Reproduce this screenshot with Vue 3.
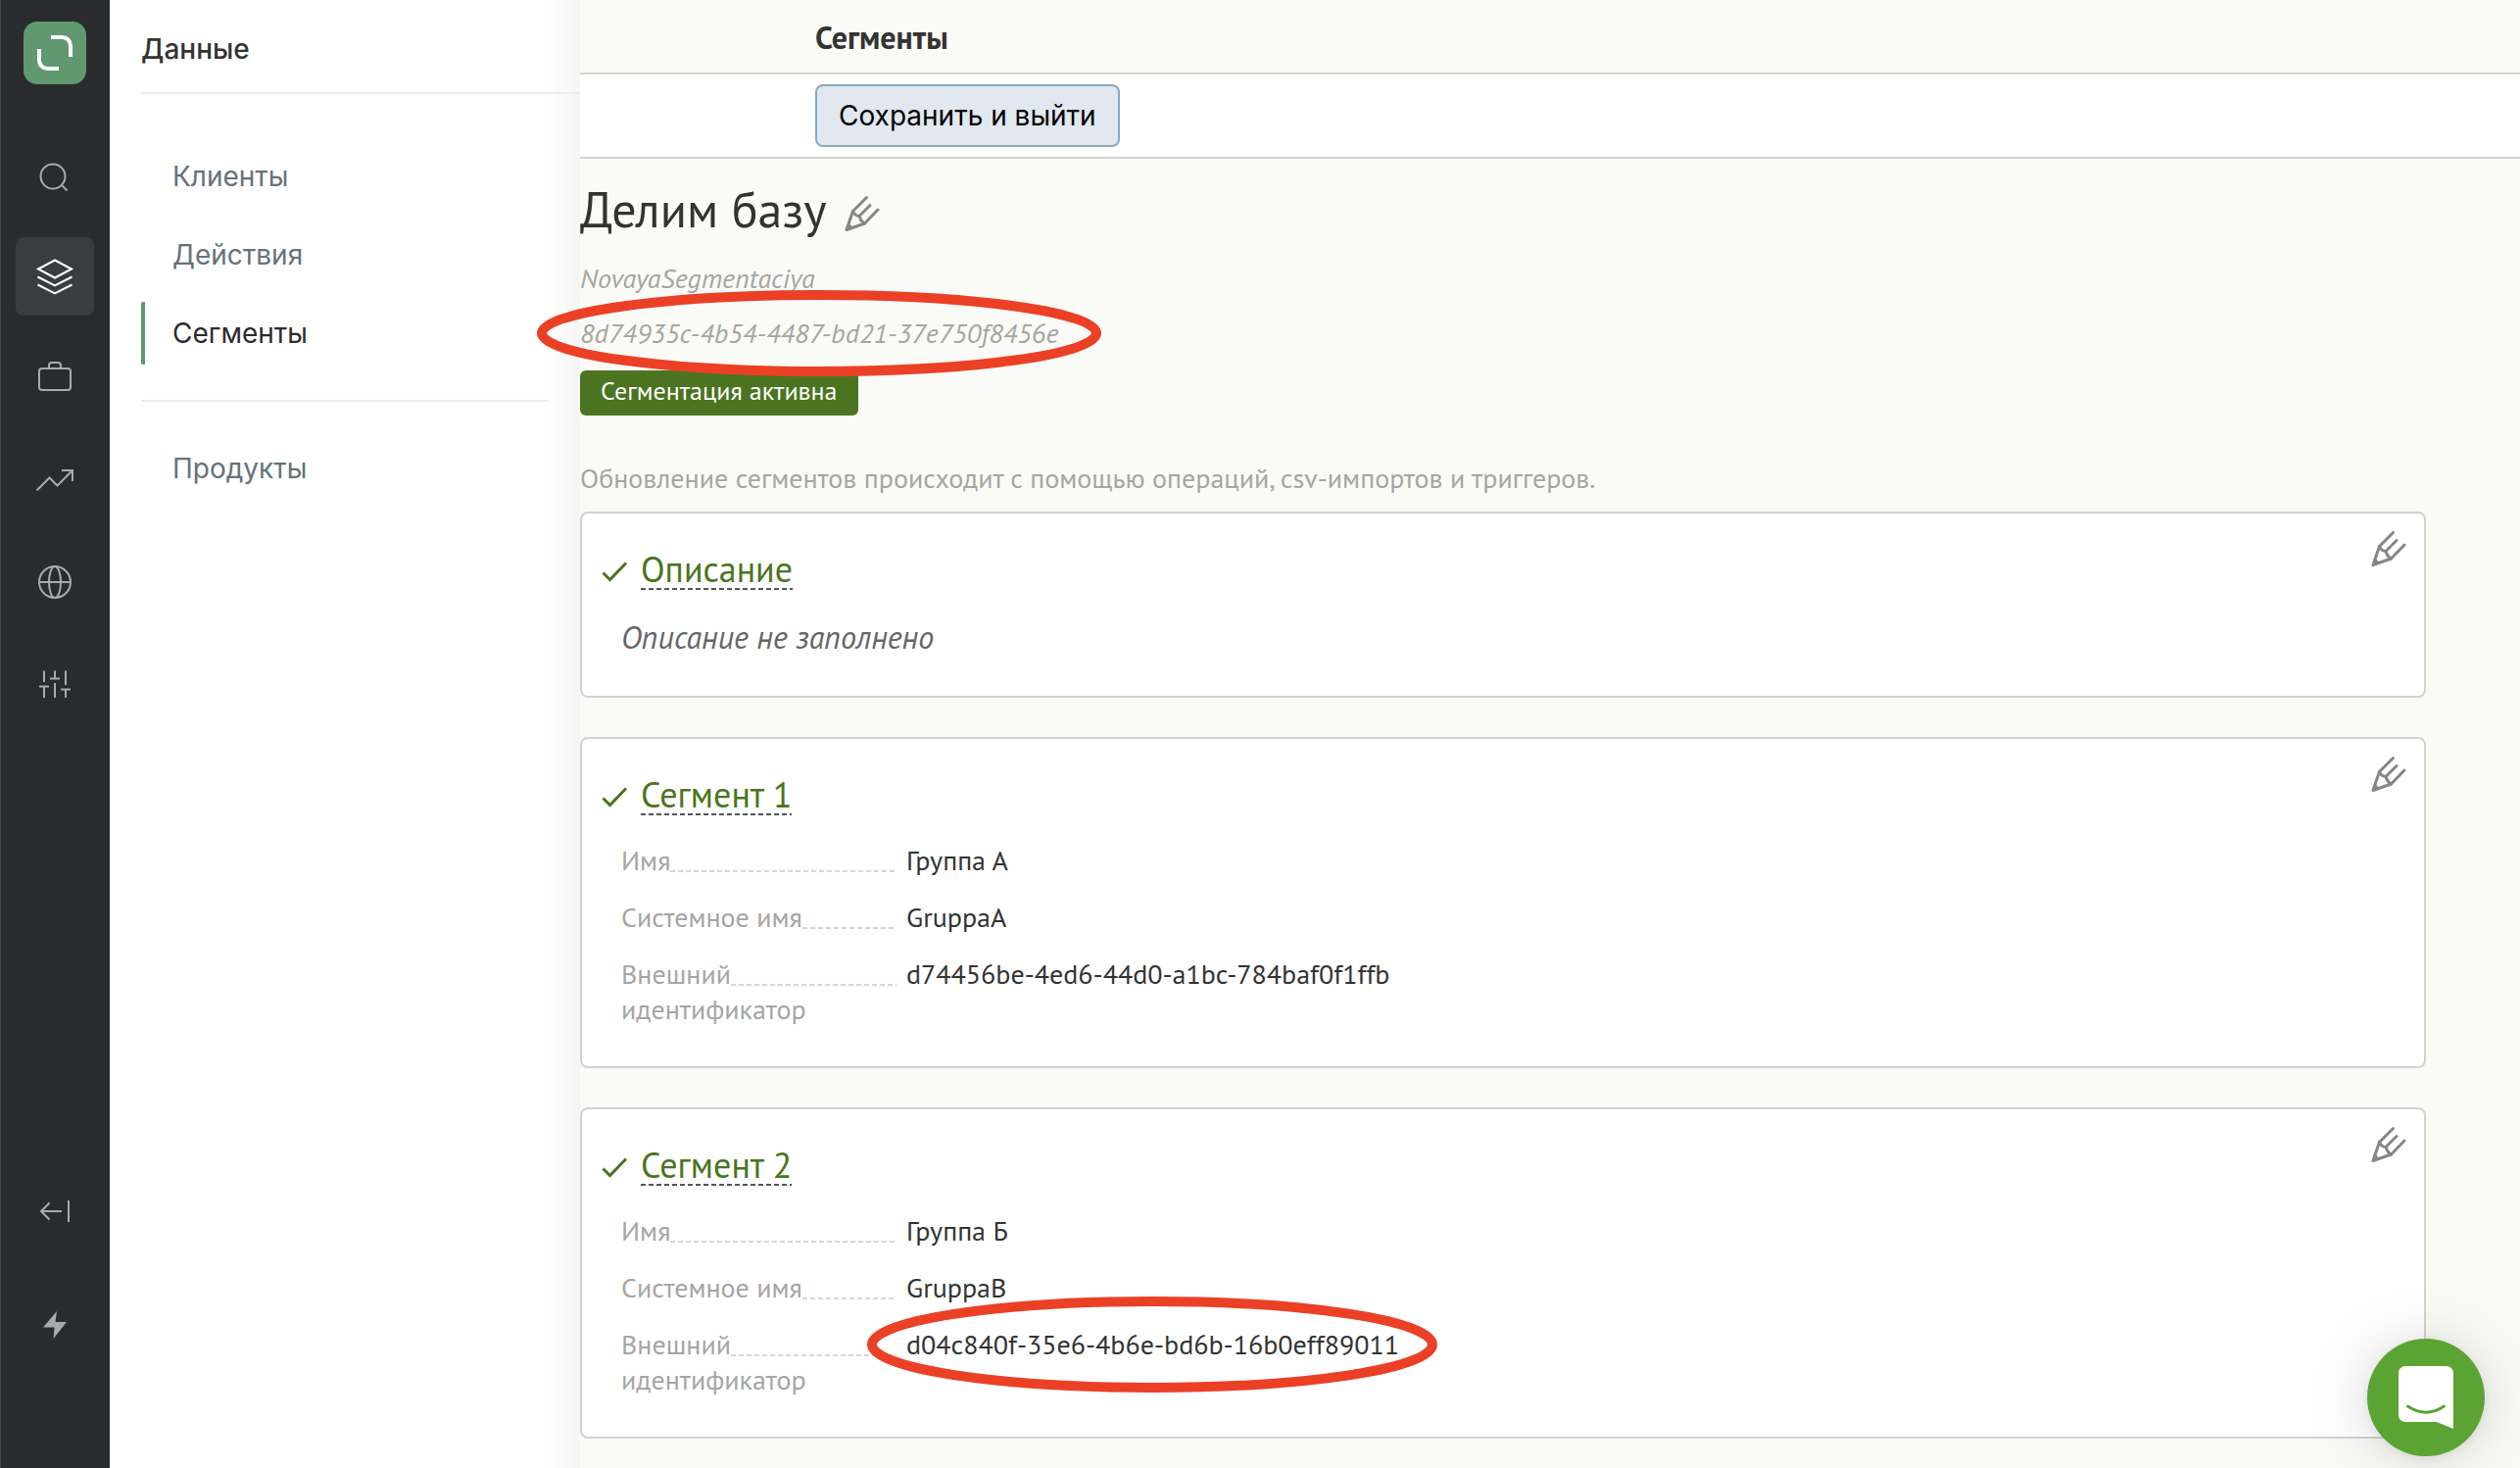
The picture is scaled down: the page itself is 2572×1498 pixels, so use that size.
<script setup>
const navItems = [
  { id: 'search', label: 'Поиск' },
  { id: 'layers', label: 'Данные', active: true },
  { id: 'case', label: 'Кампании' },
  { id: 'trend', label: 'Отчёты' },
  { id: 'globe', label: 'Интеграции' },
  { id: 'sliders', label: 'Настройки' },
]

const segments = [
  {
    title: 'Сегмент 1',
    rows: [
      { label: 'Имя', value: 'Группа А' },
      { label: 'Системное имя', value: 'GruppaA' },
      { label: 'Внешний', rest: 'идентификатор', value: 'd74456be-4ed6-44d0-a1bc-784baf0f1ffb' },
    ],
  },
  {
    title: 'Сегмент 2',
    rows: [
      { label: 'Имя', value: 'Группа Б' },
      { label: 'Системное имя', value: 'GruppaB' },
      { label: 'Внешний', rest: 'идентификатор', value: 'd04c840f-35e6-4b6e-bd6b-16b0eff89011', marked: true },
    ],
  },
]
</script>

<template>
  <div class="app">
    <svg class="defs" width="0" height="0" aria-hidden="true">
      <symbol id="pencil" viewBox="0 0 36 38">
        <g fill="none" stroke="#868686" stroke-width="3" stroke-linecap="round" stroke-linejoin="round">
          <path d="M22.5 2.5 8.5 16.5 2 35.5 20.5 29 34 15" />
          <path d="M26 10.5 15 21.5" />
          <path d="M8.5 16.5C10 20 12 21.5 15 21.5C16 25 17.5 27.5 20.5 29" />
          <path d="M4 30.5 7 33.5" />
        </g>
      </symbol>
      <symbol id="check" viewBox="0 0 28 24">
        <path d="M2.5 12.5 9.5 19.5 26 2.5" fill="none" stroke="#4b7420" stroke-width="3" />
      </symbol>
    </svg>

    <nav class="rail" aria-label="Разделы">
      <a class="logo" href="#" aria-label="Главная">
        <svg viewBox="0 0 64 64" width="64" height="64">
          <g fill="none" stroke="#fff" stroke-width="4">
            <path d="M28 16H39.5A8.5 8.5 0 0 1 48 24.5V36" />
            <path d="M16 28V39.5A8.5 8.5 0 0 0 24.5 48H36" />
          </g>
        </svg>
      </a>
      <a
        v-for="item in navItems"
        :key="item.id"
        href="#"
        class="rail-item"
        :class="{ active: item.active }"
        :aria-label="item.label"
      >
        <svg viewBox="0 0 48 48" width="48" height="48" fill="none" stroke="currentColor" stroke-width="2">
          <template v-if="item.id === 'search'">
            <circle cx="22" cy="26" r="12.5" />
            <path d="M31 35 36.5 40.5" />
          </template>
          <template v-else-if="item.id === 'layers'">
            <path d="M24 7.5 41 16.5 24 25.5 7 16.5Z" />
            <path d="M6.5 24.5 24 33.5 41.5 24.5" />
            <path d="M6.5 32.5 24 41.5 41.5 32.5" />
          </template>
          <template v-else-if="item.id === 'case'">
            <rect x="8" y="14" width="32" height="22" rx="3" />
            <path d="M18 14V11A3 3 0 0 1 21 8H27A3 3 0 0 1 30 11V14" />
          </template>
          <template v-else-if="item.id === 'trend'">
            <path d="M5.5 34.5 18.5 21.5 26.5 29.5 42 14" />
            <path d="M31 14H42V25" />
          </template>
          <template v-else-if="item.id === 'globe'">
            <circle cx="24" cy="24" r="16" />
            <ellipse cx="24" cy="24" rx="6" ry="16" />
            <path d="M8 24H40" />
          </template>
          <template v-else>
            <path d="M13 10.5V22M13 26.5V38M8 26.5H18" />
            <path d="M24 10.5V19M19 18.5H29M24 23V38" />
            <path d="M35 10.5V25M30 29.5H40M35 29.5V38" />
          </template>
        </svg>
      </a>
      <div class="rail-bottom">
        <a href="#" class="rail-item" aria-label="Свернуть">
          <svg viewBox="0 0 48 48" width="48" height="48" fill="none" stroke="currentColor" stroke-width="2">
            <path d="M31 24H10M18.5 15.5 10 24 18.5 32.5M38 13V35" />
          </svg>
        </a>
        <a href="#" class="rail-item" aria-label="Быстрые действия">
          <svg viewBox="0 0 48 48" width="48" height="48" fill="currentColor">
            <path d="M26 10 12 26.5H23.5L22.5 38 36 21H24.5Z" />
          </svg>
        </a>
      </div>
    </nav>

    <aside class="panel">
      <h2 class="panel-title">Данные</h2>
      <ul class="menu">
        <li><a href="#">Клиенты</a></li>
        <li><a href="#">Действия</a></li>
        <li><a href="#" class="current">Сегменты</a></li>
      </ul>
      <ul class="menu menu-extra">
        <li><a href="#">Продукты</a></li>
      </ul>
    </aside>

    <main class="main">
      <header class="top">Сегменты</header>
      <div class="toolbar">
        <button type="button" class="save">Сохранить и выйти</button>
      </div>

      <div class="content">
        <div class="heading">
          <h1>Делим базу</h1>
          <button type="button" class="edit" aria-label="Изменить название">
            <svg width="36" height="38"><use href="#pencil" /></svg>
          </button>
        </div>
        <p class="meta">NovayaSegmentaciya</p>
        <p class="meta">
          <span class="marked">8d74935c-4b54-4487-bd21-37e750f8456e
            <svg class="ring ring-head" viewBox="0 0 576 88" preserveAspectRatio="none" aria-hidden="true">
              <ellipse cx="288" cy="44" rx="283" ry="39" />
            </svg>
          </span>
        </p>
        <p class="badge">Сегментация активна</p>
        <p class="hint">Обновление сегментов происходит с помощью операций, csv-импортов и триггеров.</p>

        <section class="card">
          <div class="card-head">
            <svg width="28" height="24"><use href="#check" /></svg>
            <a href="#" class="card-title">Описание</a>
          </div>
          <p class="empty">Описание не заполнено</p>
          <button type="button" class="edit card-edit" aria-label="Изменить">
            <svg width="36" height="38"><use href="#pencil" /></svg>
          </button>
        </section>

        <section v-for="seg in segments" :key="seg.title" class="card">
          <div class="card-head">
            <svg width="28" height="24"><use href="#check" /></svg>
            <a href="#" class="card-title">{{ seg.title }}</a>
          </div>
          <dl class="rows">
            <div v-for="row in seg.rows" :key="row.label" class="row">
              <dt>
                <span class="leader">{{ row.label }}</span>
                <span v-if="row.rest">{{ row.rest }}</span>
              </dt>
              <dd>
                <span :class="{ marked: row.marked }">{{ row.value }}
                  <svg v-if="row.marked" class="ring ring-row" viewBox="0 0 582 98" preserveAspectRatio="none" aria-hidden="true">
                    <ellipse cx="291" cy="49" rx="286" ry="44" />
                  </svg>
                </span>
              </dd>
            </div>
          </dl>
          <button type="button" class="edit card-edit" aria-label="Изменить">
            <svg width="36" height="38"><use href="#pencil" /></svg>
          </button>
        </section>
      </div>
    </main>

    <button type="button" class="chat" aria-label="Открыть чат">
      <svg viewBox="0 0 56 64" width="56" height="64">
        <path d="M7 0H49A7 7 0 0 1 56 7V64L39 57H7A7 7 0 0 1 0 50V7A7 7 0 0 1 7 0Z" fill="#fff" />
        <path d="M9.5 41Q28 53.5 46.5 41" fill="none" stroke="#5ba433" stroke-width="3" stroke-linecap="round" />
      </svg>
    </button>
  </div>
</template>

<style>
body {
  background: #fafbf6;
}
</style>

<style scoped>
.app {
  display: flex;
  min-height: 100vh;
  font-family: "PT Sans", "Noto Sans", sans-serif;
  color: #333;
}
.defs {
  position: absolute;
}
h1, h2, p, ul, dl, dd {
  margin: 0;
  padding: 0;
}
a {
  color: inherit;
  text-decoration: none;
}
ul {
  list-style: none;
}

.rail {
  flex: none;
  box-sizing: border-box;
  width: 112px;
  min-height: 100vh;
  padding: 22px 0 106px;
  display: flex;
  flex-direction: column;
  align-items: center;
  gap: 24px;
  background: #2a2b2f;
  box-shadow: inset 1px 0 #45464a;
}
.logo {
  height: 64px;
  margin-bottom: 28px;
  border-radius: 14px;
  background: #60986f;
}
.rail-item {
  width: 80px;
  height: 80px;
  display: flex;
  align-items: center;
  justify-content: center;
  border-radius: 8px;
  color: #a9aaab;
}
.rail-item.active {
  background: #3a3c40;
  color: #fff;
}
.rail-bottom {
  margin-top: auto;
  display: flex;
  flex-direction: column;
  gap: 36px;
}
.logo svg {
  display: block;
}

.panel {
  flex: none;
  box-sizing: border-box;
  width: 480px;
  padding-left: 32px;
  background: linear-gradient(to left, #f5f5f6, #fff 32px);
  font-family: Inter, "Liberation Sans", sans-serif;
}
.panel-title {
  padding: 30px 0 24px;
  border-bottom: 2px solid #ebebeb;
  font-size: 28px;
  line-height: 40px;
  font-weight: 500;
}
.menu {
  margin-top: 52px;
  margin-right: 32px;
  padding-bottom: 36px;
  border-bottom: 2px solid #ebebeb;
  display: flex;
  flex-direction: column;
  gap: 16px;
}
.menu a {
  display: block;
  padding-left: 28px;
  border-left: 4px solid transparent;
  font-size: 28px;
  line-height: 64px;
  color: #667278;
}
.menu a.current {
  border-left-color: #60986f;
  border-radius: 2px;
  color: #2a2b2f;
}
.menu-extra {
  margin-top: 36px;
  border-bottom: 0;
}

.main {
  flex: 1;
  min-width: 0;
}
.top {
  padding: 2px 0 0 240px;
  border-bottom: 2px solid #d2d3d0;
  font-size: 32px;
  line-height: 72px;
  font-weight: 700;
}
.toolbar {
  padding: 10px 0 10px 240px;
  border-bottom: 2px solid #d2d3d0;
  background: #fff;
}
.save {
  display: block;
  height: 64px;
  padding: 0 22px;
  border: 2px solid #8aa8c0;
  border-radius: 8px;
  background: #e1e8ef;
  color: #000;
  font-family: Inter, "Liberation Sans", sans-serif;
  font-size: 28px;
}
.content {
  padding: 20px 96px 30px 0;
}
.heading {
  display: flex;
  align-items: center;
  gap: 18px;
  margin-bottom: 20px;
}
h1 {
  font-size: 50px;
  line-height: 64px;
  font-weight: 400;
}
.edit {
  padding: 0;
  border: 0;
  background: none;
}
.heading .edit {
  margin-top: 8px;
}
.edit svg {
  display: block;
}
.meta {
  margin-bottom: 20px;
  font-size: 28px;
  line-height: 36px;
  font-style: italic;
  color: #a5a5a5;
}
.marked {
  position: relative;
}
.ring {
  position: absolute;
  z-index: 1;
  overflow: visible;
  fill: none;
  stroke: #eb4025;
  stroke-width: 10px;
}
.ring-head {
  left: -44px;
  top: -25px;
  width: 576px;
  height: 88px;
}
.ring-row {
  left: -40px;
  top: -30px;
  width: 582px;
  height: 98px;
}
.badge {
  width: fit-content;
  padding: 0 21px 4px;
  border-radius: 6px;
  background: #4b7420;
  color: #fff;
  font-size: 26px;
  line-height: 42px;
}
.hint {
  margin: 46px 0 16px;
  font-size: 28px;
  line-height: 36px;
  color: #a5a5a5;
}
.card {
  position: relative;
  padding: 38px 40px 40px;
  margin-bottom: 40px;
  border: 2px solid #d2d2d2;
  border-radius: 8px;
  background: #fff;
}
.card:last-child {
  margin-bottom: 0;
}
.card-head {
  display: flex;
  align-items: center;
  gap: 13px;
  margin-left: -21px;
}
.card-head svg {
  margin-top: 3px;
}
.card-title {
  padding-bottom: 2px;
  background: repeating-linear-gradient(to right, #555 0 5px, transparent 5px 8px) bottom / 100% 2px no-repeat;
  font-size: 36px;
  line-height: 38px;
  color: #4b7420;
}
.empty {
  margin-top: 28px;
  font-size: 32px;
  line-height: 40px;
  font-style: italic;
  color: #666;
}
.card-edit {
  position: absolute;
  top: 17px;
  right: 18px;
}
.rows {
  margin-top: 28px;
  display: flex;
  flex-direction: column;
  gap: 22px;
  font-size: 28px;
  line-height: 36px;
}
.row {
  display: flex;
  gap: 10px;
}
dt {
  width: 281px;
  color: #a5a5a5;
}
dt span {
  display: block;
}
dt .leader {
  display: flex;
}
.leader::after {
  content: "";
  flex: 1;
  height: 30px;
  background: repeating-linear-gradient(to right, #d6d6d6 0 5px, transparent 5px 8px) bottom / 100% 2px no-repeat;
}

.chat {
  position: fixed;
  right: 36px;
  bottom: 12px;
  z-index: 2;
  width: 120px;
  height: 120px;
  padding: 0;
  border: 0;
  border-radius: 50%;
  display: flex;
  align-items: center;
  justify-content: center;
  background: #5ba433;
  box-shadow: 0 2px 12px rgba(0, 0, 0, 0.08), 0 4px 64px rgba(0, 0, 0, 0.16);
}
</style>
